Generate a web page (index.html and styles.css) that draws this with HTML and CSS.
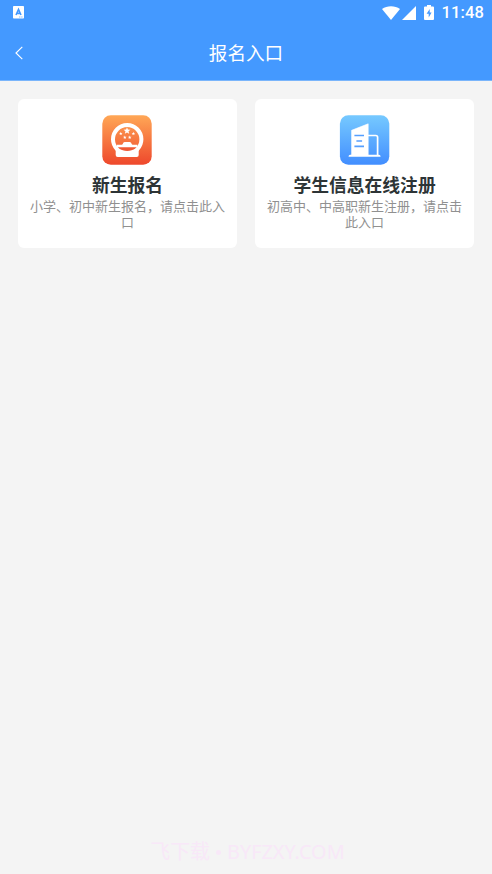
FILE: index.html
```html
<!DOCTYPE html>
<html lang="zh-CN">
<head>
<meta charset="utf-8">
<meta name="viewport" content="width=device-width, initial-scale=1">
<title>报名入口</title>
<link rel="stylesheet" href="styles.css">
</head>
<body>
<div class="screen">
  <header class="top">
    <div class="status">
      <svg class="notice" viewBox="0 0 11 13"><rect width="11" height="12.6" rx=".8" fill="#fff"/><path d="M3 9 5.500 3.500 8 9M4 7.400h3" fill="none" stroke="#4499ff" stroke-width="1.600"/><path d="M6 11h4" stroke="#8fc0ff" stroke-width="1" stroke-dasharray="1.5 .6"/></svg>
      <div class="status-right">
        <svg class="wifi" viewBox="0 0 18 14"><path d="M0 3C5-.8 13-.8 18 3L9 14Z" fill="#fff"/></svg>
        <svg class="signal" viewBox="0 0 14 14"><path d="M14 0V14H0Z" fill="#fff"/></svg>
        <svg class="battery" viewBox="0 0 10 15"><path d="M3 0h4v1.500h2q1 0 1 1V14q0 1-1 1H1q-1 0-1-1V2.500q0-1 1-1h2Z" fill="#fff"/><path d="M5.700 4 2.600 8.800h2.100v3.800L7.600 7.600H5.700Z" fill="#4499ff"/></svg>
        <span class="clock">11:48</span>
      </div>
    </div>
    <div class="navbar">
      <svg class="back" viewBox="0 0 8 14"><path d="M7.300 .9 1 7l6.300 6.100" fill="none" stroke="#fff" stroke-width="1.150"/></svg>
      <h1>报名入口</h1>
      <span></span>
    </div>
  </header>
  <main class="cards">
    <section class="card">
      <svg class="icon" viewBox="0 0 50 50">
        <defs><linearGradient id="orange" x2="0" y2="1"><stop stop-color="#ffa756"/><stop offset="1" stop-color="#ee482c"/></linearGradient></defs>
        <rect x=".3" y=".3" width="49.400" height="49.400" rx="8.500" fill="url(#orange)"/>
        <circle cx="25.200" cy="24.300" r="14.200" fill="none" stroke="#fff" stroke-width="4"/>
        <path d="M14.500 34.500h21.400q.8 0 .8 1v4.500q0 2-2 2H15.700q-2 0-2-2v-4.500q0-1 .8-1Z" fill="#fff"/>
        <path d="M17 31.800h16.400v1Q30 36 25.200 36T17 32.800Z" fill="#ef5935"/>
        <path d="M15 29.700h4.700q.8 0 1-.8.500-1.900 2-1.900h5q1.500 0 2 1.900.2.800 1 .8h4.700v2.600H15Z" fill="#fff"/>
        <path id="star" d="m25 12.200.9 2.400 2.600.1-2 1.600.7 2.500-2.200-1.400-2.200 1.400.7-2.500-2-1.600 2.600-.1Z" fill="#fff"/>
        <use href="#star" transform="translate(6.300 10.700) scale(.5)"/>
        <use href="#star" transform="translate(18.900 10.700) scale(.5)"/>
        <use href="#star" transform="translate(10.300 14.500) scale(.5)"/>
        <use href="#star" transform="translate(15.200 14.500) scale(.5)"/>
      </svg>
      <h2>新生报名</h2>
      <p>小学、初中新生报名，请点击此入口</p>
    </section>
    <section class="card">
      <svg class="icon" viewBox="0 0 50 50">
        <defs><linearGradient id="blue" x2="0" y2="1"><stop stop-color="#76c9ff"/><stop offset="1" stop-color="#428eff"/></linearGradient></defs>
        <g transform="translate(-.4 0)">
          <rect x=".3" y=".3" width="49.400" height="49.400" rx="8.500" fill="url(#blue)"/>
          <path d="M12 40V15.300L28.600 8.800V40Z" fill="#fff" stroke="#fff" stroke-width=".6" stroke-linejoin="round"/>
          <path d="M28 20.500h8.200q1.800 0 1.800 1.800V40.500" fill="none" stroke="#fff" stroke-width="1.700"/>
          <path d="M9 41.700v-.5q0-1.500 1.500-1.500h28.900q1.500 0 1.500 1.500v.5Z" fill="#fff"/>
          <path d="M14.800 20.500h9.600M16.800 26h5.700M14.800 31.400h9.600" stroke="#559fff" stroke-width="1.700"/>
        </g>
      </svg>
      <h2>学生信息在线注册</h2>
      <p>初高中、中高职新生注册，请点击此入口</p>
    </section>
  </main>
  <footer class="watermark">飞下载<span class="dot"></span>BYFZXY.COM</footer>
</div>
</body>
</html>
```

FILE: styles.css
```css
* { box-sizing: border-box; }
body {
  margin: 0;
  background: #f4f4f4;
  font-family: "Noto Sans CJK SC", sans-serif;
}
svg { display: block; overflow: visible; }
h1, h2, p { margin: 0; }
.screen {
  height: 874px;
  display: flex;
  flex-direction: column;
  overflow: hidden;
}
.top {
  height: 81px;
  background: #4499ff;
  border-bottom: 1px solid #7ab5fb;
  color: #fff;
  flex: none;
}
.status {
  height: 25px;
  display: flex;
  align-items: center;
  justify-content: space-between;
  padding: 0 8.500px 0 13px;
}
.notice { width: 11px; height: 13px; }
.status-right { display: flex; align-items: center; }
.wifi { width: 18px; height: 14px; margin-right: 2px; }
.signal { width: 14px; height: 14px; margin-right: 8.500px; }
.battery { width: 10px; height: 15px; margin: -1px 7.500px 0 0; }
.clock {
  font: 500 16.500px/25px Roboto, sans-serif;
  width: 42px;
  letter-spacing: .1px;
  white-space: nowrap;
}
.navbar {
  height: 55px;
  display: grid;
  grid-template-columns: 40px 1fr 40px;
  align-items: center;
}
.back { width: 8px; height: 14px; margin-left: 15px; }
h1 {
  padding-bottom: 2px;
  font-size: 18.600px;
  font-weight: 400;
  line-height: 28px;
  text-align: center;
}
.cards {
  display: grid;
  grid-template-columns: 1fr 1fr;
  gap: 18.800px;
  padding: 18px 18.300px 0;
}
.card {
  height: 149px;
  border-radius: 6px;
  background: #fff;
  display: flex;
  flex-direction: column;
  align-items: center;
  padding: 16px 10px 0;
}
.icon { width: 50px; height: 50px; flex: none; }
h2 {
  margin: 6px 0 1px;
  color: #2d3436;
  font-size: 17.800px;
  font-weight: 700;
  line-height: 26px;
  white-space: nowrap;
}
p {
  color: #909090;
  font-size: 13px;
  line-height: 16px;
  text-align: center;
}
.watermark {
  display: flex;
  align-items: center;
  justify-content: center;
  margin-top: auto;
  padding: 0 0 7px 3px;
  color: #f8e8f8;
  font-family: "Noto Sans", "Noto Sans CJK SC", sans-serif;
  font-size: 19.900px;
  line-height: 30px;
}
.dot {
  width: 5px;
  height: 5px;
  margin: 0 6px;
  border-radius: 50%;
  background: #f8e8f8;
}
```
